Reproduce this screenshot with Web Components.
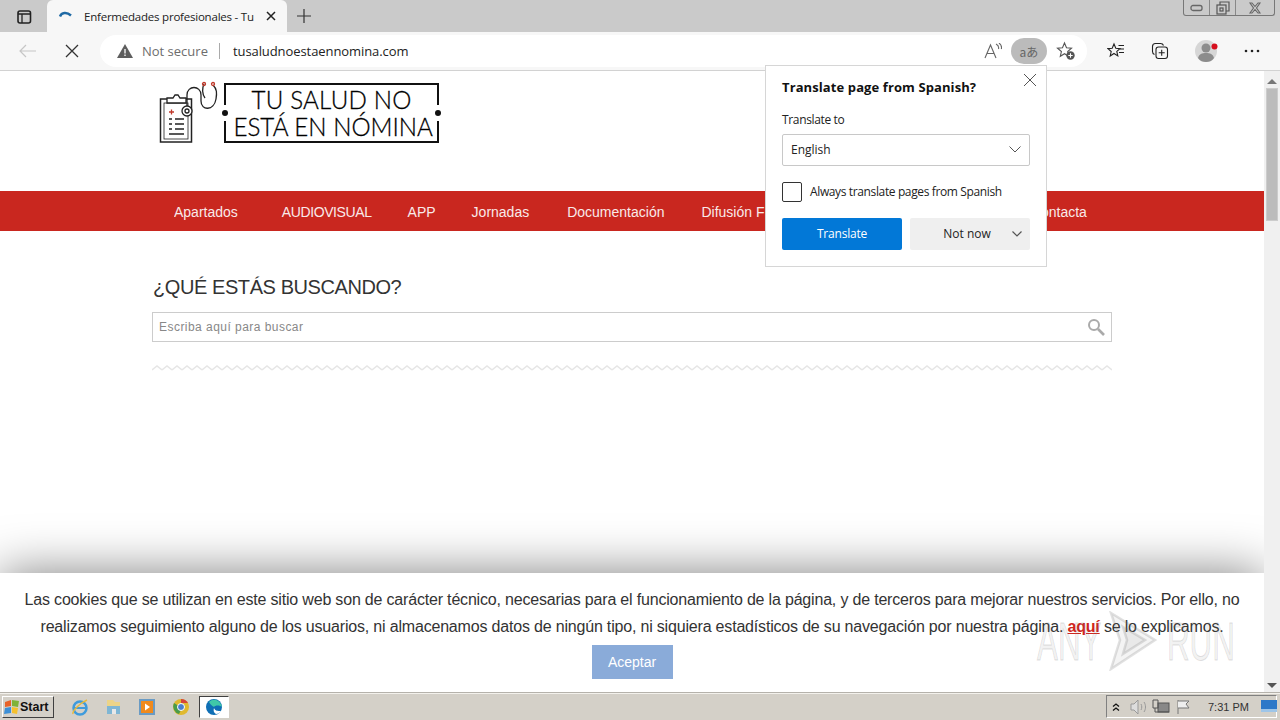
<!DOCTYPE html>
<html>
<head>
<meta charset="utf-8">
<title>Enfermedades profesionales</title>
<style>
  html, body { margin: 0; height: 100%; overflow: hidden; }
  body { width: 1280px; height: 720px; display: flex; flex-direction: column; position: relative; font-family: "Open Sans", "Liberation Sans", sans-serif; }
</style>
</head>
<body>
  <browser-tabs></browser-tabs>
  <browser-toolbar></browser-toolbar>
  <browser-view>
    <site-header></site-header>
    <site-nav></site-nav>
    <site-search></site-search>
    <cookie-bar></cookie-bar>
  </browser-view>
  <win-taskbar></win-taskbar>
  <translate-popup></translate-popup>
  <run-watermark></run-watermark>

<script>
  // small helper, every element just sets its html in an open shadow root
  class Base extends HTMLElement {
    connectedCallback() {
      if (this.shadowRoot) return;
      this.attachShadow({mode: "open"}).innerHTML = this.render();
    }
  }

  class BrowserTabs extends Base {
    render() { return `
      <style>
        :host { display: flex; height: 32px; background: #cacaca; flex: none; position: relative; }
        .winbtn { width: 47px; display: flex; align-items: center; justify-content: center; padding-top: 1px; box-sizing: border-box; }
        .tab { width: 240px; height: 32px; background: #f7f7f7; border-radius: 6px 6px 0 0; display: flex; align-items: center; box-sizing: border-box; padding-left: 11px; font-size: 11.5px; color: #222; }
        .title { margin-left: 10px; width: 171px; white-space: nowrap; letter-spacing: -.22px; }
        .x { margin-left: 10px; display: flex; }
        .plus { margin-left: 9px; display: flex; align-items: center; }
        .ctl { position: absolute; right: 5px; top: 0; width: 92px; height: 16px; border: 1px solid #777; border-top: 0; border-radius: 0 0 3px 3px; display: flex; box-sizing: border-box; background: #cacaca; }
        .ctl div { display: flex; align-items: center; justify-content: center; border-right: 1px solid #888; }
        .ctl div:last-child { border: 0; flex: 1; }
      </style>
      <div class="winbtn">
        <svg width="16" height="16" viewBox="0 0 16 16" fill="none" stroke="#222" stroke-width="1.6"><rect x="2" y="2" width="12.5" height="12" rx="2"/><path d="M2 5h12.5M6 5v9" stroke-width="1.3"/></svg>
      </div>
      <div class="tab">
        <svg width="16" height="16" viewBox="0 0 16 16" fill="none"><path d="M2 8.500C3.500 4.500 8.500 3.500 13 7.500" stroke="#1f6aa5" stroke-width="2.400"/></svg>
        <div class="title">Enfermedades profesionales - Tu</div>
        <div class="x"><svg width="12" height="12" viewBox="0 0 12 12" stroke="#222" stroke-width="1.500"><path d="M2 2l8 8M10 2l-8 8"/></svg></div>
      </div>
      <div class="plus"><svg width="16" height="16" viewBox="0 0 16 16" stroke="#333" stroke-width="1.200"><path d="M8 1v14M1 8h14"/></svg></div>
      <div class="ctl">
        <div style="width:25px"><svg width="13" height="8" viewBox="0 0 13 8" fill="none" stroke="#666" stroke-width="1.300"><rect x="1" y="1.500" width="11" height="5" rx="2"/></svg></div>
        <div style="width:25px"><svg width="14" height="14" viewBox="0 0 14 14" fill="none" stroke="#555" stroke-width="1.200"><rect x="1" y="4" width="9" height="9"/><path d="M4 4V1h9v9h-3"/><rect x="4" y="7" width="3" height="3"/></svg></div>
        <div><svg width="14" height="12" viewBox="0 0 14 12" fill="none" stroke="#666" stroke-width="1.100"><path d="M2 1h2l3 3.500L10 1h2L8.500 6 12 11h-2L7 7.500 4 11H2l3.500-5z"/></svg></div>
      </div>`; }
  }

  class BrowserToolbar extends Base {
    render() { return `
      <style>
        :host { display: flex; align-items: center; height: 39px; flex: none; background: #f7f7f7; border-bottom: 1px solid #d2d2d2; box-sizing: border-box; position: relative; }
        .nav { width: 44px; display: flex; justify-content: center; }
        .bar { margin-left: 12px; width: 987px; height: 32px; background: #fff; border-radius: 16px; display: flex; align-items: center; box-sizing: border-box; padding-left: 17px; font-size: 13px; }
        .warn { display: flex; margin-right: 9px; }
        .ns { color: #6d6d6d; }
        .sep { width: 1px; height: 16px; background: #aaa; margin: 0 13px 0 11px; }
        .url { color: #222; letter-spacing: -.08px; }
        .end { margin-left: auto; display: flex; align-items: center; }
        .aa { margin-right: 9px; display: flex; }
        .tr { width: 36px; height: 26px; border-radius: 13px; background: #bbb; display: flex; align-items: center; justify-content: center; font: 12px "Noto Sans CJK JP", "Noto Sans", sans-serif; color: #666; }
        .fav { margin: 0 11px 0 9px; display: flex; }
        .tools { display: flex; align-items: center; }
        .tools > * { flex: none; }
      </style>
      <div class="nav" style="width:56px"><svg width="18" height="14" viewBox="0 0 18 14" fill="none" stroke="#c6c6c6" stroke-width="1.200"><path d="M17 7H1M7 1L1 7l6 6"/></svg></div>
      <div class="nav" style="width:32px"><svg width="14" height="14" viewBox="0 0 14 14" stroke="#333" stroke-width="1.300"><path d="M1 1l12 12M13 1L1 13"/></svg></div>
      <div class="bar">
        <span class="warn"><svg width="16" height="14" viewBox="0 0 16 14"><path d="M8 0l8 14H0z" fill="#5e5e5e"/><path d="M8 5v4.500M8 10.500v1.500" stroke="#fff" stroke-width="1.300"/></svg></span>
        <span class="ns">Not secure</span><span class="sep"></span><span class="url">tusaludnoestaennomina.com</span>
        <div class="end">
          <span class="aa"><svg width="18" height="16" viewBox="0 0 18 16" fill="none" stroke="#666" stroke-width="1.100"><path d="M1 15L6.500 2 12 15M3 10.500h7"/><path d="M12 1c2 1 3 3 2.500 5M15 0c2 1.500 3 3.500 2.300 6"/></svg></span>
          <span class="tr">aあ</span>
          <span class="fav"><svg width="20" height="20" viewBox="0 0 20 20" fill="none" stroke="#555" stroke-width="1.100"><path d="M8.500 2l2 4.800 5 .4-3.800 3.300 1 4.800-4.200-2.600L4.300 15.300l1.100-4.800L1.500 7.200l5-.4z"/><circle cx="14.500" cy="14.500" r="4.200" fill="#555" stroke="none"/><path d="M14.500 12.300v4.400M12.300 14.500h4.400" stroke="#fff"/></svg></span>
        </div>
      </div>
      <div class="tools" style="margin-left:20px">
        <svg width="18" height="18" viewBox="0 0 18 18" fill="none" stroke="#222" stroke-width="1.100"><path d="M7 2l1.800 4.300 4.200.3-3.200 2.800 1 4.500L7 11.500 3.200 14l1-4.500L1 6.600l4.200-.3z"/><path d="M11.500 3.500H17M13 7h4M12 10.500h5"/></svg>
        <svg style="margin-left:26px" width="18" height="18" viewBox="0 0 18 18" fill="none" stroke="#222" stroke-width="1.100"><path d="M3.500 12.500C2 12 1.500 11 1.500 9.500V4.500c0-2 1-3 3-3H9.500c1.500 0 2.500.5 3 2"/><rect x="5" y="5" width="11.500" height="11.500" rx="2.500"/><path d="M10.700 7.800v6M7.700 10.800h6"/></svg>
        <svg style="margin-left:26px" width="24" height="24" viewBox="0 0 24 24"><circle cx="11" cy="12" r="11" fill="#d6d6d6"/><circle cx="11" cy="9" r="4.500" fill="#8c8c8c"/><path d="M3 19c1-4 4-5 8-5s7 1 8 5c-2 3-5 4-8 4s-6-1-8-4z" fill="#8c8c8c"/><circle cx="19.500" cy="7.500" r="3" fill="#d6101f"/></svg>
        <svg style="margin-left:25px" width="16" height="4" viewBox="0 0 16 4" fill="#222"><circle cx="2" cy="2" r="1.300"/><circle cx="8" cy="2" r="1.300"/><circle cx="14" cy="2" r="1.300"/></svg>
      </div>`; }
  }

  class BrowserView extends Base {
    render() { return `
      <style>
        :host { display: block; flex: 1; position: relative; background: #fff; overflow: hidden; font-family: "Liberation Sans", Arial, sans-serif; }
        .page { width: 1264px; }
        .sb { position: absolute; right: 0; top: 0; bottom: 0; width: 16px; background: #f0f0f0; display: flex; flex-direction: column; align-items: center; }
        .thumb { width: 12px; height: 133px; margin-top: 4px; background: #bcbcbc; border: 1px solid #ccc; box-sizing: border-box; }
        .up, .down { width: 0; height: 0; border-left: 5px solid transparent; border-right: 5px solid transparent; }
        .up { border-bottom: 5px solid #777; margin-top: 8px; }
        .down { border-top: 5px solid #555; margin-top: auto; margin-bottom: 4px; }
      </style>
      <div class="page"><slot></slot></div>
      <div class="sb"><div class="up"></div><div class="thumb"></div><div class="down"></div></div>`; }
  }

  class SiteHeader extends Base {
    render() { return `
      <style>
        :host { display: block; height: 120px; box-sizing: border-box; padding: 10px 0 0 158px; }
        .logo { display: flex; align-items: flex-start; }
        .frame { margin: 2px 0 0 6px; width: 215px; height: 60px; box-sizing: border-box; border: 2px solid #111; position: relative; text-align: center; font: 300 26px/27px Lato, "Open Sans", sans-serif; color: #000; padding-top: 1px; white-space: nowrap; -webkit-text-stroke: .3px #000; }
        .frame::before, .frame::after { content: ""; position: absolute; top: 25px; width: 6px; height: 6px; border-radius: 50%; background: #111; box-shadow: 0 0 0 5px #fff; clip-path: inset(-6px -1px); }
        .frame::before { left: -4px; } .frame::after { right: -4px; }
        .frame span { display: block; transform: scaleX(.93); }
      </style>
      <div class="logo">
        <svg width="60" height="64" viewBox="0 0 60 64" fill="none" stroke="#222" stroke-width="1.300">
          <rect x="2.500" y="18" width="31" height="43" stroke-width="1.500"/>
          <rect x="6" y="22" width="24" height="36" stroke-width=".8"/>
          <path d="M9 22v-5h6l2-3h3l2 3h6v5z" fill="#fff"/>
          <path d="M11 31h5M13.500 28.500v5" stroke="#c0392b"/>
          <path d="M11 38h3M17 38h9M11 43h3M17 43h9M11 48h3M17 48h9M11 53h15"/>
          <circle cx="29" cy="30" r="5" fill="#fff"/><circle cx="29" cy="30" r="2"/>
          <path d="M29 25V14C29 4 43 4 43 14v6c0 10 13 10 15-2 1-6 1-10-3-14M47 17C44 13 44 7 46 3"/>
          <circle cx="46" cy="3" r="1.500" stroke="#c0392b"/><circle cx="55" cy="3" r="1.500" stroke="#c0392b"/>
        </svg>
        <div class="frame"><span style="letter-spacing:.2px">TU SALUD NO</span><span>ESTÁ EN NÓMINA</span></div>
      </div>`; }
  }

  class SiteNav extends Base {
    render() { return `
      <style>
        :host { display: flex; height: 40px; align-items: center; background: #c9271f; padding: 2px 0 0 174px; box-sizing: border-box; font-size: 14px; color: #fff; white-space: nowrap; overflow: hidden; }
        span { opacity: .9; }
      </style>
      <span style="margin-right:44px">Apartados</span><span style="margin-right:36px;letter-spacing:-.4px">AUDIOVISUAL</span><span style="margin-right:36px">APP</span><span style="margin-right:38px">Jornadas</span><span style="margin-right:37px">Documentación</span><span style="margin-right:257px">Difusión FP</span><span>Contacta</span>`; }
  }

  class SiteSearch extends Base {
    render() { return `
      <style>
        :host { display: block; padding: 44px 0 0 152px; width: 960px; color: #333; }
        h2 { margin: 0 0 13px 1px; font: 20px/24px "Liberation Sans", Arial, sans-serif; letter-spacing: -.42px; color: #333; }
        .box { height: 30px; border: 1px solid #ccc; box-sizing: border-box; display: flex; align-items: center; padding: 0 6px; font-size: 12px; letter-spacing: .46px; color: #888; }
        .box svg { margin-left: auto; }
        .wave { display: block; margin-top: 21px; }
      </style>
      <h2>¿QUÉ ESTÁS BUSCANDO?</h2>
      <div class="box">Escriba aquí para buscar
        <svg width="18" height="18" viewBox="0 0 18 18" fill="none" stroke="#aaa" stroke-width="2"><circle cx="7" cy="7" r="5"/><path d="M11 11l6 6" stroke-width="2.600"/></svg>
      </div>
      <svg class="wave" width="960" height="10">
        <defs><pattern id="w" width="10" height="10" patternUnits="userSpaceOnUse"><path d="M0 7L5 3l5 4" fill="none" stroke="#e6e6e6" stroke-width="1.500"/></pattern></defs>
        <rect width="960" height="10" fill="url(#w)"/>
      </svg>`; }
  }

  class CookieBar extends Base {
    render() { return `
      <style>
        :host { position: absolute; left: 0; right: 16px; bottom: 0; height: 119px; background: #fff; box-shadow: 0 0 50px rgba(0,0,0,.5); text-align: center; box-sizing: border-box; padding-top: 13px; font-size: 16px; line-height: 27px; color: #333; letter-spacing: -.185px; }
        a { color: #d0261e; font-weight: bold; text-decoration: underline; }
        button { display: block; margin: 5px auto 0; width: 81px; height: 34px; border: 0; background: #8aabd9; color: #fff; font: 14px "Liberation Sans", Arial, sans-serif; }
      </style>
      Las cookies que se utilizan en este sitio web son de carácter técnico, necesarias para el funcionamiento de la página, y de terceros para mejorar nuestros servicios. Por ello, no<br>
      realizamos seguimiento alguno de los usuarios, ni almacenamos datos de ningún tipo, ni siquiera estadísticos de su navegación por nuestra página. <a>aquí</a> se lo explicamos.
      <button>Aceptar</button>`; }
  }

  class TranslatePopup extends Base {
    render() { return `
      <style>
        :host { position: absolute; left: 765px; top: 65px; width: 282px; height: 202px; box-sizing: border-box; background: #fff; border: 1px solid #d6d6d6; padding: 12px 16px; font-size: 12px; color: #222; }
        .close { position: absolute; right: 9px; top: 7px; display: flex; }
        h3 { margin: 0; font-size: 13px; font-weight: 700; line-height: 18px; color: #111; letter-spacing: .1px; }
        .lbl { margin-top: 16px; line-height: 16px; letter-spacing: -.35px; }
        .sel { margin-top: 6px; height: 32px; border: 1px solid #c8c8c8; border-radius: 2px; box-sizing: border-box; display: flex; align-items: center; justify-content: space-between; padding: 0 8px 2px; }
        .chk { display: flex; align-items: center; margin-top: 16px; letter-spacing: -.37px; line-height: 20px; }
        .chk i { width: 20px; height: 20px; box-sizing: border-box; border: 1px solid #333; border-radius: 2px; margin-right: 8px; }
        .btns { display: flex; margin-top: 16px; gap: 8px; }
        .b { height: 32px; width: 120px; display: flex; align-items: center; justify-content: center; border-radius: 2px; padding-bottom: 2px; box-sizing: border-box; }
        .p { background: #0278d7; color: #fff; letter-spacing: -.2px; }
        .s { background: #efefef; position: relative; padding-right: 6px; }
        .s svg { position: absolute; right: 8px; top: 13px; }
      </style>
      <div class="close"><svg width="14" height="14" viewBox="0 0 14 14" stroke="#555" stroke-width="1"><path d="M1 1l12 12M13 1L1 13"/></svg></div>
      <h3>Translate page from Spanish?</h3>
      <div class="lbl">Translate to</div>
      <div class="sel">English<svg width="12" height="7" viewBox="0 0 12 7" fill="none" stroke="#555"><path d="M.5.5L6 6l5.500-5.500"/></svg></div>
      <div class="chk"><i></i><span>Always translate pages from Spanish</span></div>
      <div class="btns">
        <div class="b p">Translate</div>
        <div class="b s">Not now<svg width="10" height="6" viewBox="0 0 10 6" fill="none" stroke="#555" stroke-width="1.200"><path d="M.5.5L5 5 9.500.5"/></svg></div>
      </div>`; }
  }

  class WinTaskbar extends Base {
    render() { return `
      <style>
        :host { display: flex; align-items: center; height: 28px; flex: none; background: #d4d0c8; border-top: 1px solid #b5b2ab; box-shadow: inset 0 1px 0 #f3f1ec; box-sizing: border-box; position: relative; font-family: "Liberation Sans", Arial, sans-serif; }
        .start { margin-left: 2px; width: 52px; height: 22px; box-sizing: border-box; border: 1px solid; border-color: #fff #404040 #404040 #fff; background: #d4d0c8; display: flex; align-items: center; padding-left: 1px; font-weight: bold; font-size: 12.500px; color: #111; gap: 0; }
        .ic { display: flex; justify-content: center; align-items: center; width: 33.700px; height: 24px; flex: none; }
        .act { width: 30px; height: 22px; background: #fff; border: 1px solid; border-color: #404040 #fff #fff #404040; box-sizing: border-box; margin-left: 1px; }
        .tray { position: absolute; right: 3px; top: 2px; width: 171px; height: 23px; box-sizing: border-box; border: 1px solid; border-color: #808080 #fff #fff #808080; display: flex; align-items: center; font-size: 11px; color: #222; }
        .tray > * { flex: none; }
      </style>
      <div class="start">
        <svg width="16" height="16" viewBox="0 0 16 16"><path d="M1 3l6-2v6l-6 1z" fill="#e8632a"/><path d="M8 1l7 1-1 6-6-1z" fill="#7fb239"/><path d="M1 9l6-1v6l-7 1z" fill="#3d8fd6"/><path d="M8 8l6 1-1 6-5-1z" fill="#f5c02c"/></svg>Start
      </div>
      <div class="ic" style="margin-left:9px"><svg width="18" height="18" viewBox="0 0 18 18" fill="none"><ellipse cx="9" cy="10" rx="6.500" ry="6.500" stroke="#3f9bdc" stroke-width="2.500"/><path d="M3 10h12" stroke="#3f9bdc" stroke-width="2"/><path d="M2 16C1 13 9 5 16 2" stroke="#e7b93b" stroke-width="1.500"/></svg></div>
      <div class="ic"><svg width="18" height="18" viewBox="0 0 18 18"><path d="M2 2h6l2 2h5v12H2z" fill="#ecd488"/><rect x="2" y="8" width="13" height="8" fill="#7fb6d4"/><rect x="7" y="11" width="4" height="5" fill="#e8e8e8"/></svg></div>
      <div class="ic"><svg width="18" height="18" viewBox="0 0 18 18"><rect x="1" y="1" width="16" height="16" fill="#6a9bc4"/><rect x="3" y="3" width="12" height="12" fill="#f08a1d"/><path d="M7 5.500l5 3.500-5 3.500z" fill="#fff"/></svg></div>
      <div class="ic"><svg width="18" height="18" viewBox="0 0 18 18"><circle cx="9" cy="9" r="8" fill="#e0b92e"/><path d="M9 1a8 8 0 0 1 7 4H9z" fill="#d6453a"/><path d="M2 5a8 8 0 0 0 5 11l3-6z" fill="#4a9b4a"/><circle cx="9" cy="9" r="3.500" fill="#4a7fd0" stroke="#fff"/></svg></div>
      <div class="act ic"><svg width="18" height="18" viewBox="0 0 18 18"><circle cx="9" cy="9" r="8" fill="#0f6fb5"/><path d="M4 4c4-4 11-3 13 5-2-2-7-2-8 0-3-2-4-3-5-5z" fill="#3fc8a8"/><path d="M9 10c1 3 4 3 7 3-1 2-3 3-5 3-2-1-3-3-2-6z" fill="#fff"/></svg></div>
      <div class="tray">
        <svg style="margin-left:4px" width="10" height="10" viewBox="0 0 10 10" fill="none" stroke="#111" stroke-width="1.300"><path d="M2 4.500L5 2l3 2.500M2 8.500L5 6l3 2.500"/></svg>
        <svg style="margin-left:8px" width="18" height="16" viewBox="0 0 18 16" fill="none" stroke="#999"><path d="M2 5h3l4-4v14l-4-4H2z" fill="#ddd"/><path d="M12 5c1 2 1 4 0 6M15 3c2 3 2 7 0 10"/></svg>
        <svg style="margin-left:5px" width="18" height="18" viewBox="0 0 18 18" fill="none" stroke="#555"><rect x="6" y="5" width="11" height="9" fill="#888"/><path d="M1 2h5v8H1zM3 14h14M3 10v4"/></svg>
        <svg style="margin-left:6px" width="16" height="16" viewBox="0 0 16 16" fill="none" stroke="#777"><path d="M2 1v14"/><path d="M2 2h11l-3 3 3 4H2" fill="#eee"/></svg>
        <span style="margin-left:16px;color:#333">7:31 PM</span>
        <svg style="margin-left:12px" width="16" height="14" viewBox="0 0 16 14"><rect width="16" height="12" fill="#2d78c8"/><rect y="9" width="16" height="3" fill="#9ec5e8"/></svg>
      </div>`; }
  }

  class RunWatermark extends Base {
    render() { return `
      <style>
        :host { position: absolute; left: 1037px; top: 610px; width: 196px; height: 62px; display: flex; align-items: center; pointer-events: none; font: 54px "Liberation Sans", Arial, sans-serif; color: rgba(120,120,120,.1); -webkit-text-stroke: 1px rgba(120,120,120,.22); }
        span { display: inline-block; transform: scaleX(.58); transform-origin: left; width: 66px; }
        svg { flex: none; }
      </style>
      <span>ANY</span>
      <svg width="60" height="60" viewBox="0 0 60 60" fill="rgba(120,120,120,.08)" stroke="rgba(120,120,120,.22)" stroke-width="2.500"><path d="M8 2l44 27-44 29 9-29z"/><path d="M20 16l22 13-22 14 4-14z"/></svg>
      <span style="margin-left:4px">RUN</span>`; }
  }

  window.customElements.define("browser-tabs", BrowserTabs);
  window.customElements.define("browser-toolbar", BrowserToolbar);
  window.customElements.define("browser-view", BrowserView);
  window.customElements.define("site-header", SiteHeader);
  window.customElements.define("site-nav", SiteNav);
  window.customElements.define("site-search", SiteSearch);
  window.customElements.define("cookie-bar", CookieBar);
  window.customElements.define("translate-popup", TranslatePopup);
  window.customElements.define("win-taskbar", WinTaskbar);
  window.customElements.define("run-watermark", RunWatermark);
</script>
</body>
</html>
